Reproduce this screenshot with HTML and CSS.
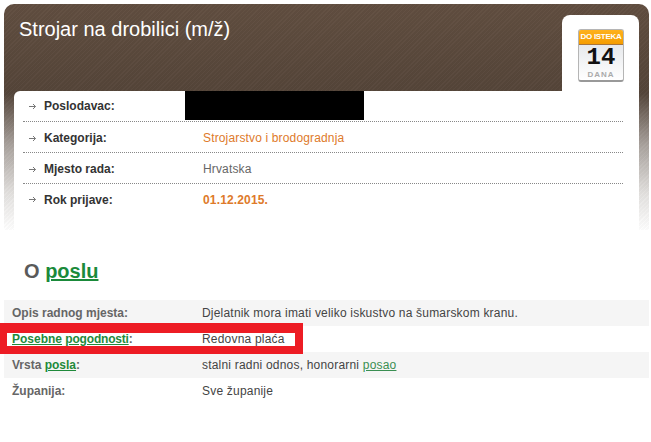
FILE: index.html
```html
<!DOCTYPE html>
<html lang="en">
<head>
  <meta charset="UTF-8" />
  <title>Strojar na drobilici (m/ž)</title>
  <link rel="stylesheet" href="styles.css">
</head>
<body>
  <section class="job-head">
    <h1 class="job-title">Strojar na drobilici (m/ž)</h1>
    <div class="days-badge">
      <div class="calendar">
        <div class="cal-top">DO ISTEKA</div>
        <div class="cal-num">14</div>
        <div class="cal-unit">DANA</div>
      </div>
    </div>
    <div class="job-card">
      <div class="card-row"><svg class="arrow" width="7" height="7" viewBox="0 0 7 7"><path d="M0 3.5H6.5M4 1L6.5 3.5L4 6" fill="none" stroke="#777"/></svg><span class="card-label">Poslodavac:</span><span class="redacted"></span></div>
      <div class="card-row shifted"><svg class="arrow" width="7" height="7" viewBox="0 0 7 7"><path d="M0 3.5H6.5M4 1L6.5 3.5L4 6" fill="none" stroke="#777"/></svg><span class="card-label">Kategorija:</span><span class="card-value orange">Strojarstvo i brodogradnja</span></div>
      <div class="card-row shifted"><svg class="arrow" width="7" height="7" viewBox="0 0 7 7"><path d="M0 3.5H6.5M4 1L6.5 3.5L4 6" fill="none" stroke="#777"/></svg><span class="card-label">Mjesto rada:</span><span class="card-value">Hrvatska</span></div>
      <div class="card-row"><svg class="arrow" width="7" height="7" viewBox="0 0 7 7"><path d="M0 3.5H6.5M4 1L6.5 3.5L4 6" fill="none" stroke="#777"/></svg><span class="card-label">Rok prijave:</span><span class="card-value orange bold">01.12.2015.</span></div>
    </div>
  </section>

  <h2 class="about-title">O <a href="#">poslu</a></h2>

  <section class="about-list">
    <div class="about-row grey"><span class="about-label">Opis radnog mjesta:</span><span class="about-value">Djelatnik mora imati veliko iskustvo na šumarskom kranu.</span></div>
    <div class="about-row"><span class="about-label tight"><a href="#">Posebne</a> <a href="#">pogodnosti</a>:</span><span class="about-value">Redovna plaća</span></div>
    <div class="about-row grey"><span class="about-label">Vrsta <a href="#">posla</a>:</span><span class="about-value">stalni radni odnos, honorarni <a href="#" class="plain">posao</a></span></div>
    <div class="about-row"><span class="about-label">Županija:</span><span class="about-value">Sve županije</span></div>
    <div class="red-mark"></div>
  </section>
</body>
</html>
```

FILE: styles.css
```css
*{box-sizing:border-box;margin:0;padding:0;}
body{background:#fff;color:#444;font-family:"Liberation Sans",Arial,sans-serif;font-size:12px;}
a{color:#1f8a3b;}

.job-head{position:relative;margin:4px 2px 0 4px;height:226px;padding:87px 10px 0;border-radius:10px 10px 0 0;background:repeating-linear-gradient(135deg,rgba(255,255,255,.025) 0 1px,rgba(0,0,0,.02) 1px 3px),linear-gradient(#614e40 0,#554539 85px,#55463b 90px,#a8a19c 140px,#e4e2e0 190px,#fff 226px);}
.job-title{position:absolute;left:15px;top:14px;font-size:20px;font-weight:400;color:#fff;}

.days-badge{position:absolute;right:10px;top:11px;width:77px;height:80px;background:#fff;border-radius:8px 8px 0 0;}
.calendar{position:absolute;left:16px;top:14px;width:46px;height:53px;border-radius:3px;background:linear-gradient(#dcdfe3,#fff);border:1px solid #b5b5b5;border-bottom:2px solid #999;text-align:center;overflow:hidden;}
.cal-top{height:16px;margin:-1px -1px 0;background:linear-gradient(#ffb320,#f59c00);border-bottom:1px solid #a8743a;color:#fff;font-size:8px;font-weight:700;letter-spacing:-.3px;line-height:15px;white-space:nowrap;}
.cal-num{font-family:"Liberation Mono",monospace;font-size:24px;font-weight:700;line-height:25px;color:#111;}
.cal-unit{font-size:8px;font-weight:700;line-height:9px;color:#aaa;letter-spacing:1px;}

.job-card{position:relative;height:139px;padding:0 16px 0 9px;background:#fff;border-radius:6px 0 0 0;color:#666;}
.card-row{display:flex;align-items:center;height:31px;border-bottom:1px dotted #888;}
.card-row:last-child{border-bottom:none;}
.card-row.shifted{padding-top:2px;}
.arrow{margin:0 8px 0 6px;flex:none;}
.card-label{width:159px;font-weight:700;color:#333;}
.card-value{letter-spacing:.15px;}
.orange{color:#de7a2a;}
.bold{font-weight:700;}
.redacted{width:179px;height:29px;margin:0 0 2px -18px;background:#000;}

.about-title{margin:26px 0 0 24px;font-size:20px;font-weight:700;line-height:30px;color:#5a5a5a;}
.about-title a{color:#1a8a3a;text-decoration-thickness:2px;}

.about-list{position:relative;margin:14px 2px 0 4px;}
.about-row{display:flex;align-items:center;height:26px;padding-left:8px;color:#444;}
.about-row.grey{background:#f5f5f5;}
.about-label{width:190px;font-weight:700;color:#666;}
.about-label.tight a:last-of-type{letter-spacing:-.2px;}
.about-label a{color:#1f8a3b;}
.about-value{letter-spacing:.2px;}
.plain{color:#3a8f52;}
.red-mark{position:absolute;left:-4px;top:23px;width:303px;height:31px;border:solid #ed1c24;border-width:10px 8px 8px 7px;}
```
